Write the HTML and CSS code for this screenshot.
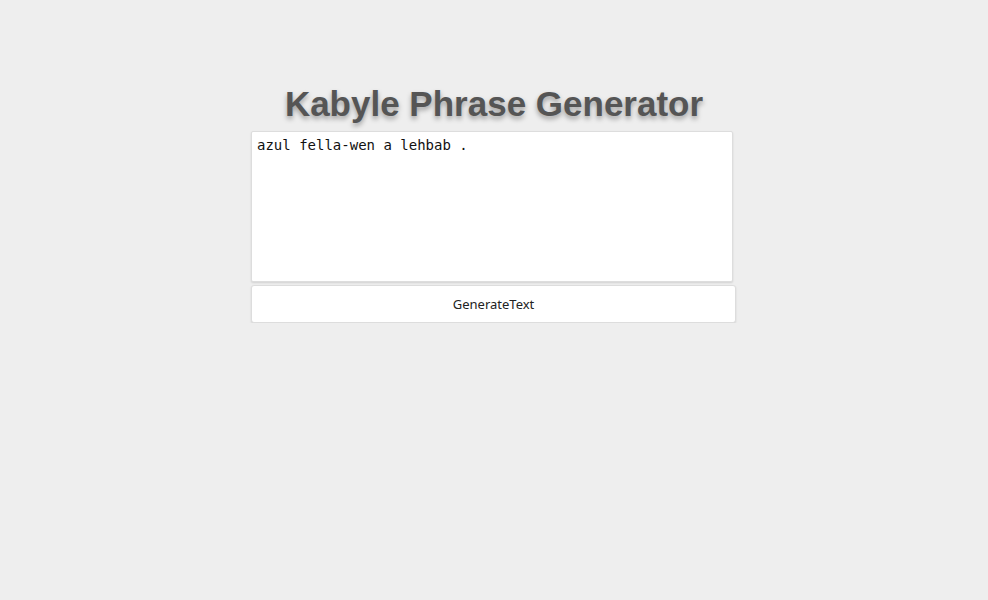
FILE: index.html
```html
<!DOCTYPE html>
<html>
<head>
<meta charset="utf-8">
<link rel="stylesheet" href="styles.css">
</head>
<body>
<main class="wrap">
  <h1 class="title">Kabyle Phrase Generator</h1>
  <textarea class="output">azul fella-wen a lehbab .</textarea>
  <button class="gen">GenerateText</button>
</main>
</body>
</html>
```
FILE: styles.css
```css
html, body {
  margin: 0;
  padding: 0;
  background: #eeeeee;
}
.wrap {
  display: flex;
  flex-direction: column;
  align-items: flex-start;
  width: 486px;
  margin: 0 auto;
  padding-top: 84px;
}
.title {
  margin: 0 0 7px 0;
  align-self: center;
  font-family: "Liberation Sans", Arial, sans-serif;
  font-weight: bold;
  font-size: 35px;
  line-height: 40px;
  color: #555555;
  text-shadow: 0 3px 5px rgba(0,0,0,0.35);
}
.output {
  box-sizing: border-box;
  width: 482px;
  height: 151px;
  margin: 0;
  padding: 5px 5px;
  border: 1px solid #dddddd;
  border-radius: 2px;
  background: #fff;
  box-shadow: 0 1px 2px rgba(0,0,0,0.12);
  font-family: "DejaVu Sans Mono", monospace;
  font-size: 14px;
  line-height: 16px;
  color: #111;
  resize: none;
}
.gen {
  box-sizing: border-box;
  width: 485px;
  height: 38px;
  margin-top: 3px;
  border: 1px solid #dddddd;
  border-radius: 3px;
  background: #fff;
  box-shadow: 0 1px 2px rgba(0,0,0,0.12);
  font-family: "Noto Sans", "Open Sans", sans-serif;
  font-size: 13px;
  color: #222;
}
```
